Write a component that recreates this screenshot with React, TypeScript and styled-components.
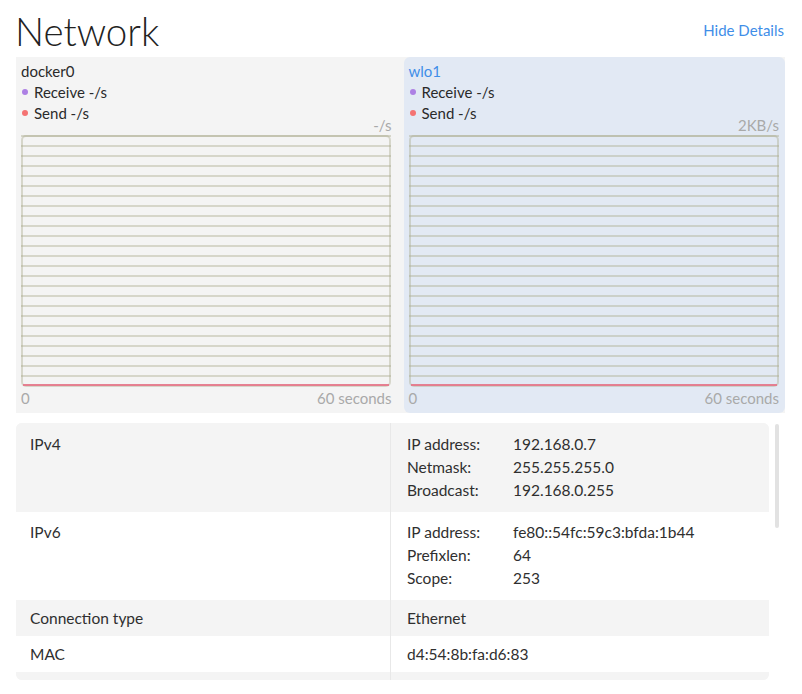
import { FC } from "react";
import styled, { createGlobalStyle } from "styled-components";

const GlobalStyle = createGlobalStyle`
  html, body {
    margin: 0;
    padding: 0;
    background: #fff;
  }
  body {
    font-family: "Lato", "Liberation Sans", sans-serif;
    color: #2a2a2a;
  }
`;

const Page = styled.div`
  padding: 0 17px 0 16px;
  width: 769px;
`;

const Header = styled.div`
  display: flex;
  align-items: center;
  justify-content: space-between;
  padding-top: 9px;
  margin-bottom: 4px;
`;

const Title = styled.h1`
  margin: 0 0 0 -1px;
  font-size: 38.5px;
  line-height: 44px;
  font-weight: 300;
  color: #222;
`;

const LinkButton = styled.a`
  font-size: 15px;
  color: #3f8ee8;
  cursor: pointer;
  margin-top: -2px;
  margin-right: 1px;
`;

// 인터페이스 그래프 영역
const Graphs = styled.div`
  display: flex;
  gap: 6px;
  background: #f4f4f4;
`;

const Panel = styled.div<{ $selected?: boolean }>`
  flex: 1;
  padding: 4px 6px 7px 5px;
  border-radius: 6px;
  background: ${(p) => (p.$selected ? "#e2e9f4" : "transparent")};
`;

const IfaceName = styled.div<{ $selected?: boolean }>`
  font-size: 15px;
  line-height: 21px;
  color: ${(p) => (p.$selected ? "#3f8ee8" : "#2a2a2a")};
`;

const LegendItem = styled.div`
  display: flex;
  align-items: center;
  gap: 6px;
  font-size: 15px;
  line-height: 21px;
  color: #2a2a2a;
`;

const Dot = styled.span<{ $color: string }>`
  width: 6px;
  height: 6px;
  border-radius: 50%;
  margin-left: 1px;
  margin-top: -2px;
  background: ${(p) => p.$color};
`;

const Scale = styled.div`
  text-align: right;
  font-size: 15px;
  line-height: 14px;
  margin-top: -6px;
  color: #a9a9a9;
`;

const ChartWrap = styled.div`
  margin-top: 3px;
  height: 252px;
`;

const Axis = styled.div`
  display: flex;
  justify-content: space-between;
  font-size: 15px;
  line-height: 15px;
  margin-top: 4px;
  color: #a9a9a9;
`;

// 상세 정보 테이블
const Details = styled.div`
  margin-top: 10px;
  position: relative;
  width: 769px;
`;

const Table = styled.div`
  width: 753px;
  background: #f4f4f4;
  border-radius: 6px;
  overflow: hidden;
`;

const Row = styled.div<{ $odd?: boolean }>`
  display: grid;
  grid-template-columns: 375px 1fr;
  background: ${(p) => (p.$odd ? "#f4f4f4" : "#fff")};
`;

const LabelCell = styled.div<{ $multi?: boolean }>`
  padding: ${(p) => (p.$multi ? "9.5px 14px 10px" : "6.5px 14px")};
  font-size: 15.5px;
  line-height: 23px;
  border-right: 1px solid #e8e8e8;
  color: #2f2f2f;
`;

const ValueCell = styled.div<{ $multi?: boolean }>`
  padding: ${(p) => (p.$multi ? "9.5px 16px 10px" : "6.5px 16px")};
  font-size: 15.5px;
  line-height: 23px;
  color: #2f2f2f;
`;

const Spacer = styled.div`
  height: 8px;
  border-right: 1px solid #e8e8e8;
`;

const KV = styled.div`
  display: grid;
  grid-template-columns: 106px 1fr;
`;

const ScrollThumb = styled.div`
  position: absolute;
  right: 6px;
  top: 1px;
  width: 4px;
  height: 104px;
  border-radius: 2px;
  background: #e2e2e2;
`;

const gridColor = "rgba(170,170,140,0.4)";

const Chart: FC<{ width: number; height: number }> = ({ width, height }) => {
  const lines = [];
  for (let y = 1; y < height - 10; y += 10) {
    lines.push(
      <line key={y} x1={0} x2={width} y1={y} y2={y} stroke={gridColor} strokeWidth={2} />
    );
  }
  return (
    <svg width={width} height={height} style={{ display: "block" }}>
      <rect x={1} y={1} width={width - 2} height={height - 2} rx={4} fill="none" stroke={gridColor} strokeWidth={2} />
      {lines}
      <line x1={2} x2={width - 2} y1={height - 2} y2={height - 2} stroke="#b08be6" strokeWidth={1.5} />
      <line x1={2} x2={width - 2} y1={height - 2} y2={height - 2} stroke="#f27474" strokeWidth={1.5} />
    </svg>
  );
};

const IfacePanel: FC<{ name: string; scale: string; selected?: boolean }> = ({ name, scale, selected }) => (
  <Panel $selected={selected}>
    <IfaceName $selected={selected}>{name}</IfaceName>
    <LegendItem>
      <Dot $color="#ad80e4" />
      Receive -/s
    </LegendItem>
    <LegendItem>
      <Dot $color="#f47373" />
      Send -/s
    </LegendItem>
    <Scale>{scale}</Scale>
    <ChartWrap>
      <Chart width={370} height={252} />
    </ChartWrap>
    <Axis>
      <span>0</span>
      <span>60 seconds</span>
    </Axis>
  </Panel>
);

const App: FC = () => {
  return (
    <>
      <GlobalStyle />
      <Page>
        <Header>
          <Title>Network</Title>
          <LinkButton>Hide Details</LinkButton>
        </Header>
        <Graphs>
          <IfacePanel name="docker0" scale="-/s" />
          <IfacePanel name="wlo1" scale="2KB/s" selected />
        </Graphs>
        <Details>
          <Table>
            <Row $odd>
              <LabelCell $multi>IPv4</LabelCell>
              <ValueCell $multi>
                <KV><span>IP address:</span><span>192.168.0.7</span></KV>
                <KV><span>Netmask:</span><span>255.255.255.0</span></KV>
                <KV><span>Broadcast:</span><span>192.168.0.255</span></KV>
              </ValueCell>
            </Row>
            <Row>
              <LabelCell $multi>IPv6</LabelCell>
              <ValueCell $multi>
                <KV><span>IP address:</span><span>fe80::54fc:59c3:bfda:1b44</span></KV>
                <KV><span>Prefixlen:</span><span>64</span></KV>
                <KV><span>Scope:</span><span>253</span></KV>
              </ValueCell>
            </Row>
            <Row $odd>
              <LabelCell>Connection type</LabelCell>
              <ValueCell>Ethernet</ValueCell>
            </Row>
            <Row>
              <LabelCell>MAC</LabelCell>
              <ValueCell>d4:54:8b:fa:d6:83</ValueCell>
            </Row>
            <Row $odd>
              <Spacer />
              <div />
            </Row>
          </Table>
          <ScrollThumb />
        </Details>
      </Page>
    </>
  );
};

export default App;
